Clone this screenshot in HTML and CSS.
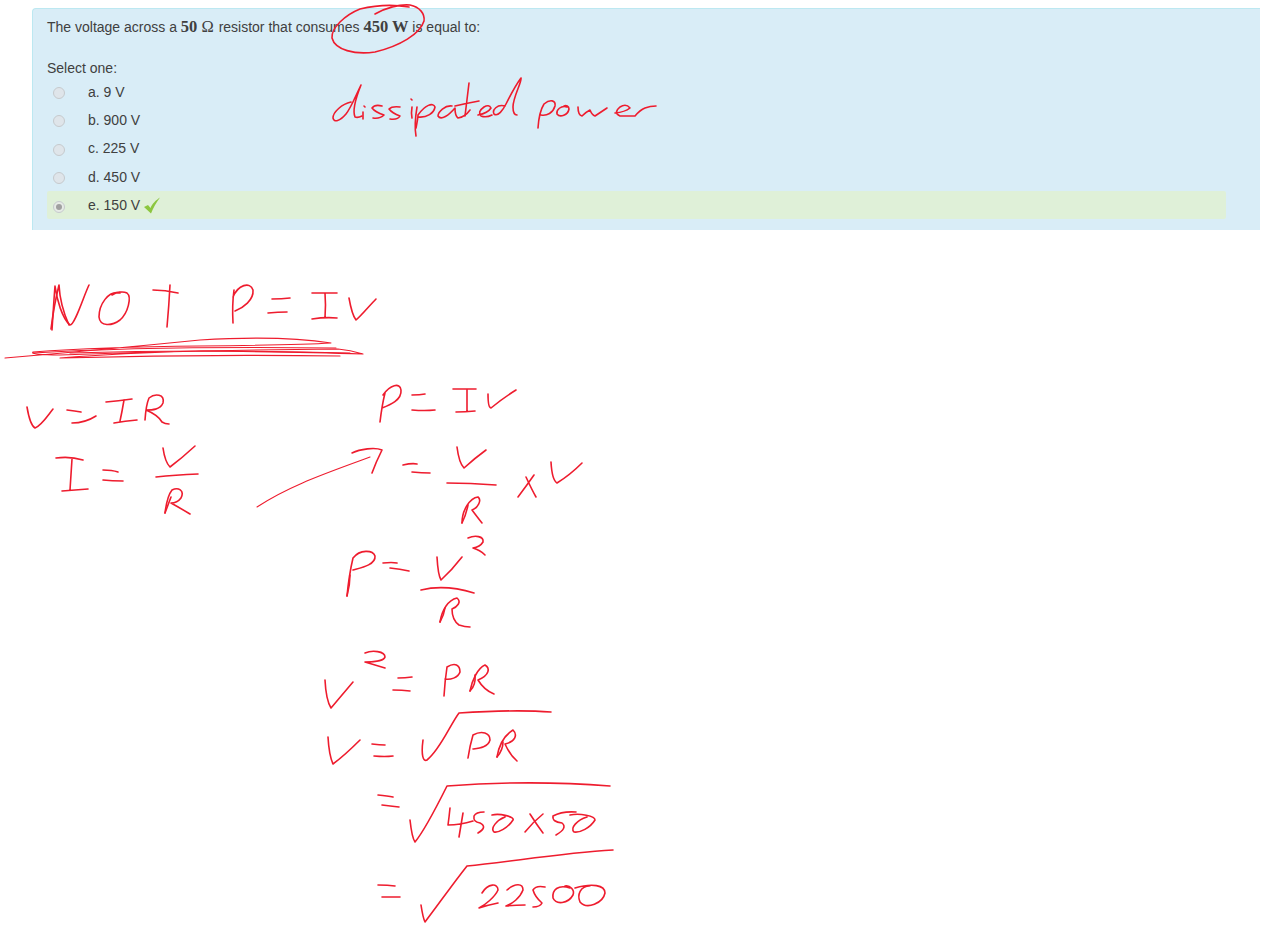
FILE: index.html
```html
<!DOCTYPE html>
<html lang="en">
<head>
<meta charset="utf-8">
<title>Quiz question</title>
<link rel="stylesheet" href="styles.css">
</head>
<body>
<main class="page">
  <section class="question">
    <p class="prompt">The voltage across a <span class="math">50 <span class="omega">Ω</span></span> resistor that consumes <span class="math">450 W</span> is equal to:</p>
    <p class="select">Select one:</p>
    <div class="answers">
      <div class="answer"><span class="radio"></span><span>a. 9 V</span></div>
      <div class="answer"><span class="radio"></span><span>b. 900 V</span></div>
      <div class="answer"><span class="radio"></span><span>c. 225 V</span></div>
      <div class="answer"><span class="radio"></span><span>d. 450 V</span></div>
      <div class="answer correct"><span class="radio checked"></span><span>e. 150 V</span>
        <svg class="tick" width="16" height="17" viewBox="0 0 16 17"><path d="M0 10 L4 8 L6.500 11 C8 7 12 3 16 0.500 C12.500 5.500 9 11 7 16.500 Z"/></svg>
      </div>
    </div>
  </section>
</main>
<svg class="ink" width="1262" height="928" viewBox="0 0 1262 928" fill="none">
  <!-- circle round 450 W -->
  <path d="M375 14 C385 8 400 4 410 5 C420 7 425 14 424 21 C420 34 400 46 375 52 C355 55 335 50 332 38 C331 28 345 15 360 9 Q385 3 409 7"/>
  <!-- dissipated power -->
  <path d="M351 102 C342 104 333 112 333 118 C334 123 340 121 346 114 C351 108 356 95 361 85 C357 95 352 110 355 117 Q358 118 362 116"/>
  <path d="M363 112 L363 119 M364 106 L365 107"/>
  <path d="M382 106 Q375 104 372 108 Q375 112 384 115 Q380 119 373 118"/>
  <path d="M400 107 Q392 106 389 109 Q392 113 400 116 Q398 120 390 119"/>
  <path d="M412 107 Q411 113 412 118 M411 99 L412 100"/>
  <path d="M416 136 Q414 125 417 107 M416 128 Q418 118 418 115 C425 105 433 102 435 107 C434 113 427 118 418 117"/>
  <path d="M452 106 C445 105 438 112 438 116 C441 121 449 115 455 108 Q455 116 458 118 Q465 117 470 110"/>
  <path d="M469 83 Q467 100 465 116 M455 106 Q468 103 479 101"/>
  <path d="M478 115 Q488 113 491 108 Q489 104 484 107 Q477 112 481 116 Q486 118 492 115"/>
  <path d="M505 106 C497 104 492 110 494 114 C498 117 503 110 506 104 C510 96 518 82 521 78 C522 82 513 97 513 107 Q513 115 517 115"/>
  <path d="M538 128 Q539 112 544 104 C550 99 556 100 555 106 C553 113 547 116 541 115"/>
  <path d="M567 107 C561 105 556 110 557 114 C560 118 568 115 569 109 C569 106 566 105 564 106"/>
  <path d="M578 107 Q578 115 582 116 Q586 112 590 110 Q592 115 595 116 Q601 112 607 108"/>
  <path d="M615 113 Q625 112 630 108 Q626 103 620 107 Q613 113 620 116 Q628 116 635 116 Q640 110 645 108 Q650 106 656 106"/>
  <!-- NOT P=IV -->
  <path d="M52 330 C53 315 54 298 55 286 C57 300 62 318 70 325 C75 325 84 295 89 285"/>
  <path d="M51 329 Q54 305 59 285 Q60 305 69 325"/>
  <path d="M120 293 C108 290 99 305 99 317 C100 327 112 326 120 320 C128 313 132 297 127 293 C123 291 116 292 112 295"/>
  <path d="M153 290 Q165 290 178 293 M170 285 Q169 305 167 327"/>
  <path d="M233 323 Q232 305 234 290 M233 297 C238 285 250 281 253 290 C254 300 243 308 235 311"/>
  <path d="M272 299 Q282 299 290 298 M268 313 Q278 312 287 312"/>
  <path d="M312 293 Q325 293 337 293 M325 293 Q326 305 325 318 M312 319 Q325 317 337 318"/>
  <path d="M349 298 Q352 315 356 320 C362 315 370 305 376 299"/>
  <!-- underline scribble -->
  <path class="thin" d="M5 358 Q100 350 200 340 Q280 335 331 343 Q300 345 200 346 Q100 347 33 352 Q30 355 60 355 Q200 350 338 349 Q350 350 363 354 Q300 352 200 351 Q120 353 60 358 Q200 354 340 356"/>
  <path class="thin" d="M33 353 Q150 346 336 348 M70 353 Q200 349 350 353"/>
  <!-- V=IR -->
  <path d="M27 407 Q30 425 35 428 C42 425 48 415 53 409"/>
  <path d="M67 410 Q75 411 81 412 M72 423 Q85 423 96 416"/>
  <path d="M106 402 Q118 401 132 399 M124 400 Q122 412 120 421 M114 423 Q125 421 137 420"/>
  <path d="M145 420 Q146 405 149 398 C155 393 165 394 163 403 C160 410 152 410 146 410 Q158 415 162 422 Q165 424 169 424"/>
  <!-- I=V/R -->
  <path d="M56 458 Q70 456 83 460 M72 459 Q71 475 70 490 M62 491 Q75 490 88 489"/>
  <path d="M103 470 Q112 470 118 472 M103 480 Q112 481 123 481"/>
  <path d="M163 448 Q165 462 170 467 Q182 458 195 446"/>
  <path d="M156 477 Q175 475 198 474"/>
  <path d="M165 513 C166 505 168 495 172 490 C178 487 185 490 181 498 C178 502 173 503 171 503 Q180 508 190 514"/>
  <path d="M165 513 Q168 505 171 497"/>
  <!-- arrow -->
  <path class="thin" d="M257 507 C290 485 330 472 370 457"/>
  <path d="M352 453 C360 449 375 447 382 450 Q376 462 372 473"/>
  <!-- P=IV second -->
  <path d="M380 422 Q382 405 385 393 M383 395 C390 385 400 382 401 390 C402 400 390 405 382 408"/>
  <path d="M412 395 Q420 395 425 394 M412 410 Q425 411 435 410"/>
  <path d="M453 389 Q465 389 476 389 M467 390 Q467 402 467 411 M456 412 Q465 412 475 411"/>
  <path d="M488 394 Q488 408 491 408 Q503 398 516 390"/>
  <path d="M403 465 Q412 463 417 464 M412 472 Q422 473 430 473"/>
  <path d="M457 447 Q459 463 464 468 Q475 458 486 450"/>
  <path d="M447 483 Q470 483 496 485"/>
  <path d="M462 523 C462 510 470 498 478 497 C482 500 478 508 472 510 Q478 518 482 523"/>
  <path d="M462 523 Q466 515 468 505"/>
  <path d="M518 497 Q527 485 534 475 M526 477 Q532 490 536 497"/>
  <path d="M551 462 Q552 480 557 483 Q570 475 582 463"/>
  <!-- P=V2/R -->
  <path d="M468 538 C475 535 484 536 483 542 Q480 547 473 548 Q480 550 485 555"/>
  <path d="M347 596 Q349 575 353 558 C360 549 373 550 375 556 C376 565 360 568 353 570"/>
  <path d="M347 596 Q350 585 350 575"/>
  <path d="M383 563 Q392 562 397 563 M390 568 Q400 569 409 571"/>
  <path d="M437 557 Q438 575 441 580 Q452 570 462 557"/>
  <path d="M421 590 Q445 584 474 593"/>
  <path d="M440 622 C442 610 448 600 457 598 C462 602 457 607 452 609 Q452 620 459 625 Q465 627 470 627"/>
  <path d="M440 622 Q444 615 445 608"/>
  <!-- V2=PR -->
  <path d="M325 680 Q326 700 331 708 Q342 695 353 682"/>
  <path d="M365 653 C372 650 385 651 385 657 C384 661 372 662 365 662 Q375 665 385 668"/>
  <path d="M398 678 Q405 678 412 677 M393 690 Q402 690 410 691"/>
  <path d="M444 696 Q445 680 447 667 C455 662 460 665 460 672 C458 678 450 680 445 679"/>
  <path d="M470 691 C472 680 478 668 485 665 C490 668 490 675 478 680 Q484 690 494 694"/>
  <path d="M470 691 Q476 685 475 675"/>
  <!-- V=sqrt PR -->
  <path d="M328 737 Q329 755 333 764 Q345 755 360 740"/>
  <path d="M372 744 Q380 745 385 745 M374 756 Q385 757 393 756"/>
  <path d="M423 740 C421 755 423 762 427 760 C440 750 450 725 459 713 C490 711 525 710 551 712"/>
  <path d="M468 758 Q470 745 473 735 C482 730 490 733 490 740 C488 747 480 748 473 749"/>
  <path d="M497 757 C499 745 505 735 513 730 C518 735 515 742 505 744 Q510 755 517 761"/>
  <path d="M497 757 Q503 750 503 742"/>
  <!-- =sqrt 450x50 -->
  <path d="M378 795 Q388 796 393 797 M382 805 Q390 806 399 807"/>
  <path d="M410 820 Q412 838 415 842 C425 830 440 800 447 786 C500 782 560 782 610 786"/>
  <path d="M450 808 Q449 818 448 825 Q460 825 473 821 M463 813 Q461 825 459 837"/>
  <path d="M484 812 Q476 812 474 816 Q473 822 480 823 Q488 827 478 833"/>
  <path d="M492 815 C500 813 515 817 513 820 C508 828 498 833 494 832 C490 828 497 820 505 817"/>
  <path d="M525 832 Q533 822 543 814 M530 814 Q537 825 543 833"/>
  <path d="M576 812 Q562 811 553 816 Q552 822 562 823 Q568 828 556 835"/>
  <path d="M570 815 C580 813 595 816 595 820 C590 828 580 833 574 832 C570 828 577 820 587 817"/>
  <!-- =sqrt 22500 -->
  <path d="M378 885 Q388 885 395 886 M382 897 Q392 897 400 897"/>
  <path d="M421 905 Q423 918 425 922 C438 905 452 885 467 866 C510 862 560 853 613 850"/>
  <path d="M482 893 C488 883 498 883 498 890 C495 897 485 905 479 908 Q488 905 498 903"/>
  <path d="M507 890 C515 883 523 883 523 890 C520 898 512 904 506 906 Q515 905 525 905"/>
  <path d="M545 887 Q536 885 533 890 Q535 897 542 903 Q540 907 533 907"/>
  <path d="M570 888 C558 884 552 890 553 898 C556 905 568 904 573 895 C575 890 570 885 565 886"/>
  <path d="M590 886 C580 886 577 895 580 902 C587 910 603 903 605 893 C605 885 592 883 575 888"/>
</svg>
</body>
</html>
```
FILE: styles.css
```css
* {
  box-sizing: border-box;
}

html,
body {
  margin: 0;
  height: 100%;
  background: #fff;
}

body {
  position: relative;
  overflow: hidden;
  font-family: "Liberation Sans", Arial, sans-serif;
  font-size: 14px;
  line-height: 20px;
  color: #404040;
}

.page {
  padding: 8px 2px 0 32px;
}

.question {
  height: 222px;
  padding: 8px 34px 0 14px;
  background: #d9edf7;
  border-top: 1px solid #bce8f1;
  border-left: 1px solid #bce8f1;
  border-top-left-radius: 4px;
}

.prompt {
  margin: 0;
}

.math {
  font-family: "Liberation Serif", "Times New Roman", serif;
  font-weight: 700;
  font-size: 16.500px;
}

.omega {
  font-weight: 400;
  letter-spacing: 1px;
}

.select {
  margin: 21px 0 0;
  height: 19.400px;
}

.answers {
  display: flex;
  flex-direction: column;
}

.answer {
  display: flex;
  align-items: center;
  height: 28.400px;
  padding-left: 6px;
  border-radius: 2px;
}

.correct {
  background: #dff0d8;
}

.radio {
  flex: none;
  display: flex;
  align-items: center;
  justify-content: center;
  width: 12px;
  height: 12px;
  margin-top: 3px;
  margin-right: 23px;
  border: 1px solid #c6cacd;
  border-radius: 50%;
  background: #dfe5ea;
}

.checked::after {
  content: "";
  width: 6px;
  height: 6px;
  border-radius: 50%;
  background: #a0a0a0;
}

.correct .radio {
  background: #e6ebe6;
}

.tick {
  margin-left: 4px;
  margin-top: 1px;
}

.tick path {
  fill: #8cc63f;
}

.ink {
  position: absolute;
  top: 0;
  left: 0;
  pointer-events: none;
}

.ink path {
  stroke: #ee1c2e;
  stroke-width: 1.600;
  stroke-linecap: round;
  stroke-linejoin: round;
}

.ink .thin {
  stroke-width: 1.100;
}
```
